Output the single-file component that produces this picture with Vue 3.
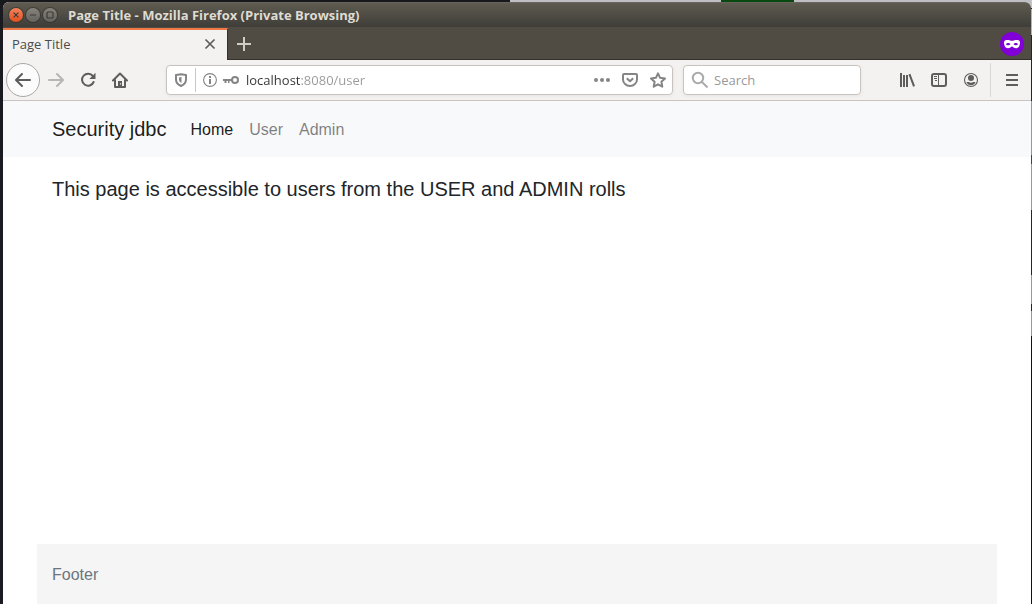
<script setup>
import { ref } from 'vue'

const address = ref('localhost:8080/user')
const query = ref('')
const links = [
  { label: 'Home', href: '#home', active: true },
  { label: 'User', href: '#user', active: false },
  { label: 'Admin', href: '#admin', active: false },
]
</script>

<template>
  <div class="desktop">
    <div class="window">
      <header class="titlebar">
        <button class="wm close" aria-label="Close">
          <svg viewBox="0 0 14 14"><path d="M4.6 4.6l4.8 4.8M9.4 4.6l-4.8 4.8" /></svg>
        </button>
        <button class="wm" aria-label="Minimize">
          <svg viewBox="0 0 14 14"><path d="M4 7h6" /></svg>
        </button>
        <button class="wm" aria-label="Maximize">
          <svg viewBox="0 0 14 14"><rect x="4" y="4" width="6" height="6" rx="1" /></svg>
        </button>
        <span class="title">Page Title - Mozilla Firefox (Private Browsing)</span>
      </header>

      <div class="tabs">
        <div class="tab">
          <span class="tab-label">Page Title</span>
          <button class="tab-close" aria-label="Close tab">
            <svg width="16" height="16" viewBox="0 0 16 16"><path d="M3.500 3.500l9 9M12.500 3.500l-9 9" /></svg>
          </button>
        </div>
        <button class="new-tab" aria-label="New tab">
          <svg width="16" height="16" viewBox="0 0 16 16"><path d="M8 1v14M1 8h14" /></svg>
        </button>
        <svg class="mask" width="24" height="24" viewBox="0 0 24 24">
          <circle cx="12" cy="12" r="12" fill="#8000d7" />
          <path
            fill="#fff"
            fill-rule="evenodd"
            d="M4 10.300C4 8.500 5.500 8 7.500 8c2 0 3.300.8 4.500.8S14.500 8 16.500 8c2 0 3.500.5 3.500 2.300 0 3.200-1.300 6-4 6-2.200 0-2.800-1.900-4-1.900s-1.800 1.900-4 1.900c-2.700 0-4-2.800-4-6zM6 12.200c.8 1.300 3.300 1.500 4.500.1-1-1.800-3.500-1.900-4.500-.1zM13.500 12.300c1.200 1.400 3.700 1.200 4.500-.1-1-1.800-3.500-1.700-4.500.1z"
          />
        </svg>
      </div>

      <nav class="toolbar" aria-label="Browser">
        <button class="back" aria-label="Back">
          <svg width="16" height="16" viewBox="0 0 16 16"><path class="line" d="M15 8H1.500M7 2L1 8l6 6" /></svg>
        </button>
        <button class="tool faded" aria-label="Forward">
          <svg width="16" height="16" viewBox="0 0 16 16"><path class="line" d="M1 8h13.500M9 2l6 6-6 6" /></svg>
        </button>
        <button class="tool" aria-label="Reload">
          <svg width="16" height="16" viewBox="0 0 16 16">
            <path class="line" d="M12.900 4.200A6 6 0 1 0 13.600 10" />
            <path d="M15.500.8v6.200H9.300z" />
          </svg>
        </button>
        <button class="tool" aria-label="Home">
          <svg width="16" height="16" viewBox="0 0 16 16">
            <path class="line" d="M1 8.500L8 1.500l7 7M3 8v7h10V8" />
            <path fill-rule="evenodd" d="M6 9h4v6H6zM8 11.300h1v1.200H8z" />
          </svg>
        </button>

        <div class="field address">
          <button class="mini shield" aria-label="Tracking protection">
            <svg width="14" height="16" viewBox="0 0 14 16">
              <path class="line" d="M7 2.200L12 3v4.500c0 3.100-2 5.200-5 6.500-3-1.300-5-3.400-5-6.500V3z" />
              <path d="M7.500 5v6C5.800 10.200 5 9 5 7.300V5.500z" />
            </svg>
          </button>
          <button class="mini info" aria-label="Site information">
            <svg width="14" height="14" viewBox="0 0 14 14">
              <circle cx="7" cy="7" r="6.400" fill="none" stroke="#858585" stroke-width="1.100" />
              <path d="M6 3h2v2H6zM6 6h2v5H6z" />
            </svg>
          </button>
          <button class="mini key" aria-label="Saved login">
            <svg width="16" height="10" viewBox="0 0 16 10">
              <circle class="line" cx="12" cy="5" r="3" />
              <path d="M0 4h9v2H6.500v2H5V6H3.500v2h-2V6H0z" />
            </svg>
          </button>
          <input v-model="address" class="url" type="text" aria-label="Address" />
          <button class="mini act" aria-label="Page actions">
            <svg width="16" height="16" viewBox="0 0 16 16">
              <circle cx="2" cy="8" r="2" /><circle cx="8" cy="8" r="2" /><circle cx="14" cy="8" r="2" />
            </svg>
          </button>
          <button class="mini act" aria-label="Save to Pocket">
            <svg width="16" height="16" viewBox="0 0 16 16">
              <path class="line" d="M2 2h12q1 0 1 1v4.500a7 6.500 0 0 1-14 0V3q0-1 1-1z" />
              <path class="line" d="M4.800 6.200L8 9.300l3.200-3.100" />
            </svg>
          </button>
          <button class="mini act" aria-label="Bookmark">
            <svg width="16" height="16" viewBox="0 0 16 16">
              <path class="line" d="M8 1.300l2.100 4.500 4.900.6-3.600 3.400.9 4.900L8 12.300l-4.300 2.400.9-4.900L1 6.400l4.900-.6z" />
            </svg>
          </button>
        </div>

        <div class="field search">
          <svg width="18" height="18" viewBox="0 0 18 18">
            <circle cx="7" cy="7" r="5.200" /><path d="M11 11l5.500 5.500" />
          </svg>
          <input v-model="query" type="search" placeholder="Search" aria-label="Search" />
        </div>

        <button class="tool" aria-label="Library">
          <svg width="16" height="16" viewBox="0 0 16 16">
            <path d="M1 1h2v14H1zM4 3h2v12H4zM7 3h2v12H7zM9.500 2.400l1.900-.7L16 14l-1.900.8z" />
          </svg>
        </button>
        <button class="tool" aria-label="Sidebars">
          <svg width="16" height="16" viewBox="0 0 16 16">
            <rect class="line" x="1" y="2" width="14" height="12" rx="2" />
            <path d="M7 2h1v12H7zM3 4h3v1H3zM3 6h3v1H3zM4 8h2v1H4z" />
          </svg>
        </button>
        <button class="tool" aria-label="Account">
          <svg width="16" height="16" viewBox="0 0 16 16">
            <circle cx="8" cy="8" r="6.500" fill="none" stroke="#5e5d5b" stroke-width="1.100" />
            <circle cx="8" cy="6" r="3" />
            <path d="M3.500 10h2.200q2.300 1.500 4.600 0h2.200q-1.300 3.200-4.500 3.200T3.500 10z" />
          </svg>
        </button>
        <span class="separator"></span>
        <button class="tool" aria-label="Menu">
          <svg width="12" height="16" viewBox="0 0 12 16"><path d="M0 2h12v2H0zM0 7h12v2H0zM0 12h12v2H0z" /></svg>
        </button>
      </nav>

      <div class="page">
        <nav class="navbar">
          <div class="container">
            <a class="brand" href="#top">Security jdbc</a>
            <a
              v-for="link in links"
              :key="link.label"
              class="link"
              :class="{ active: link.active }"
              :href="link.href"
            >{{ link.label }}</a>
          </div>
        </nav>
        <main class="container content">
          <h5>This page is accessible to users from the USER and ADMIN rolls</h5>
        </main>
        <footer class="container footer">Footer</footer>
      </div>
    </div>
  </div>
</template>

<style>
body {
  margin: 0;
}
</style>

<style scoped>
* {
  box-sizing: border-box;
}
button {
  border: 0;
  padding: 0;
  background: none;
  flex: none;
  display: flex;
  align-items: center;
  justify-content: center;
}
svg {
  display: block;
  flex: none;
}
.desktop {
  min-height: 100vh;
  display: flex;
  padding: 2px 1px 0 3px;
  background:
    linear-gradient(#c3c5c6 0 8px, #222 8px 9px, #b5b5b5 9px 35px, #063a0e 35px 101px, #999 101px 155px, #444 155px 164px, #999 164px 210px, #063a0e 210px 275px, #999 275px 304px, #223 304px 311px, #999 311px 336px, #101418 336px) right / 1px 100% no-repeat,
    linear-gradient(90deg, #17181b 510px, #c0c0c4 510px 721px, #07480f 721px 794px, #c0c0c4 794px) top / 100% 8px no-repeat,
    #191b20;
}
.window {
  flex: 1;
  min-width: 0;
  display: flex;
  flex-direction: column;
  border-radius: 6px 6px 0 0;
  overflow: hidden;
  background: #fff;
  font-family: "Open Sans", "Noto Sans", sans-serif;
}
.titlebar {
  height: 25px;
  flex: none;
  display: flex;
  align-items: center;
  gap: 3px;
  padding: 0 6px;
  background: linear-gradient(#5f5b50, #3e3d38);
  border-top: 1px solid #69655a;
}
.wm {
  width: 14px;
  height: 14px;
  border-radius: 50%;
  background: linear-gradient(#85837b, #65635d);
  box-shadow: 0 0 0 1px rgba(40, 39, 35, 0.5);
}
.wm svg {
  width: 14px;
  height: 14px;
  fill: none;
  stroke: #3c3b37;
  stroke-width: 1.2;
}
.close {
  background: linear-gradient(#f5825c, #e0501f);
}
.title {
  margin-left: 8px;
  font: bold 13px/24px "Open Sans", "Noto Sans", sans-serif;
  color: #dfdbd2;
  white-space: nowrap;
}
.tabs {
  height: 33px;
  flex: none;
  display: flex;
  align-items: stretch;
  padding-right: 7px;
  background: #504c44;
  box-shadow: inset 0 -1px #33312c;
}
.tab {
  width: 225px;
  margin-top: 1px;
  display: flex;
  align-items: center;
  justify-content: space-between;
  padding: 0 9px 2px 9px;
  border-top: 2px solid #f07746;
  border-right: 1px solid #33312c;
  background: #f3f2f0;
}
.tab-label {
  font-size: 13px;
  line-height: 16px;
  color: #4c4c4c;
}
.tab-close svg {
  fill: none;
  stroke: #5e5d5b;
  stroke-width: 1.7;
}
.new-tab {
  width: 32px;
}
.new-tab svg {
  fill: none;
  stroke: #d0cdc5;
  stroke-width: 2;
}
.mask {
  margin-left: auto;
  margin-top: 5px;
}
.toolbar {
  height: 41px;
  flex: none;
  display: flex;
  align-items: center;
  padding: 0 3px;
  background: #f3f2f0;
  border-bottom: 1px solid #c8c4c1;
}
.tool {
  width: 32px;
  height: 32px;
}
.tool svg,
.back svg {
  fill: #5e5d5b;
}
.tool .line,
.back .line {
  fill: none;
  stroke: #5e5d5b;
  stroke-width: 2;
  stroke-linecap: round;
  stroke-linejoin: round;
}
.faded {
  opacity: 0.4;
}
.back {
  width: 34px;
  height: 34px;
  border: 1px solid #aaa8a5;
  border-radius: 50%;
  background: #fcfcfc;
}
.field {
  height: 30px;
  display: flex;
  align-items: center;
  border: 1px solid #c8c3be;
  border-radius: 4px;
  background: #fff;
  box-shadow: 0 1px 4px rgba(0, 0, 0, 0.06);
}
.address {
  flex: 1;
  min-width: 0;
  margin-left: 30px;
}
.search {
  width: 178px;
  margin: 0 30px 0 10px;
  padding-left: 7px;
  gap: 5px;
}
.search svg {
  fill: none;
  stroke: #aaa;
  stroke-width: 2;
}
.field input {
  flex: 1;
  min-width: 0;
  width: 0;
  height: 28px;
  border: 0;
  outline: 0;
  padding: 0;
  background: none;
  font: 13px/28px "Open Sans", "Noto Sans", sans-serif;
  color: #333;
}
.field input::placeholder {
  color: #999;
  opacity: 1;
}
/* host name dark, port and path grey */
.field .url {
  margin-left: 8px;
  color: transparent;
  caret-color: #333;
  background: linear-gradient(90deg, #333 55px, #999 55px);
  -webkit-background-clip: text;
  background-clip: text;
}
.mini svg {
  fill: #858585;
}
.mini .line {
  fill: none;
  stroke: #858585;
  stroke-width: 2;
  stroke-linejoin: round;
}
.shield {
  width: 29px;
  height: 24px;
  border-right: 1px solid #c8c8c8;
}
.info {
  width: 28px;
}
.key {
  width: 14px;
}
.act {
  width: 28px;
  height: 28px;
}
.separator {
  width: 1px;
  height: 34px;
  margin: 0 5px 0 3px;
  background: #d9d7d4;
}
.page {
  flex: 1;
  display: flex;
  flex-direction: column;
  font: 16px/25px "Liberation Sans", Arial, sans-serif;
  color: #212529;
}
.container {
  width: 100%;
  max-width: 960px;
  margin: 0 auto;
  padding: 0 15px;
}
.navbar {
  background: #f8f9fa;
  padding: 8px 0;
}
.navbar .container {
  display: flex;
  align-items: center;
}
.brand {
  margin-right: 16px;
  font-size: 20px;
  line-height: 30px;
  color: rgba(0, 0, 0, 0.9);
  text-decoration: none;
}
.link {
  padding: 8px 8px 7px;
  color: rgba(0, 0, 0, 0.5);
  text-decoration: none;
}
.link.active {
  color: rgba(0, 0, 0, 0.9);
}
.content {
  flex: 1;
  padding-top: 20px;
}
h5 {
  margin: 0;
  font-size: 20px;
  line-height: 24px;
  font-weight: 500;
}
.footer {
  padding: 18px 15px 17px;
  background: #f5f5f5;
  color: #6c757d;
}
</style>
